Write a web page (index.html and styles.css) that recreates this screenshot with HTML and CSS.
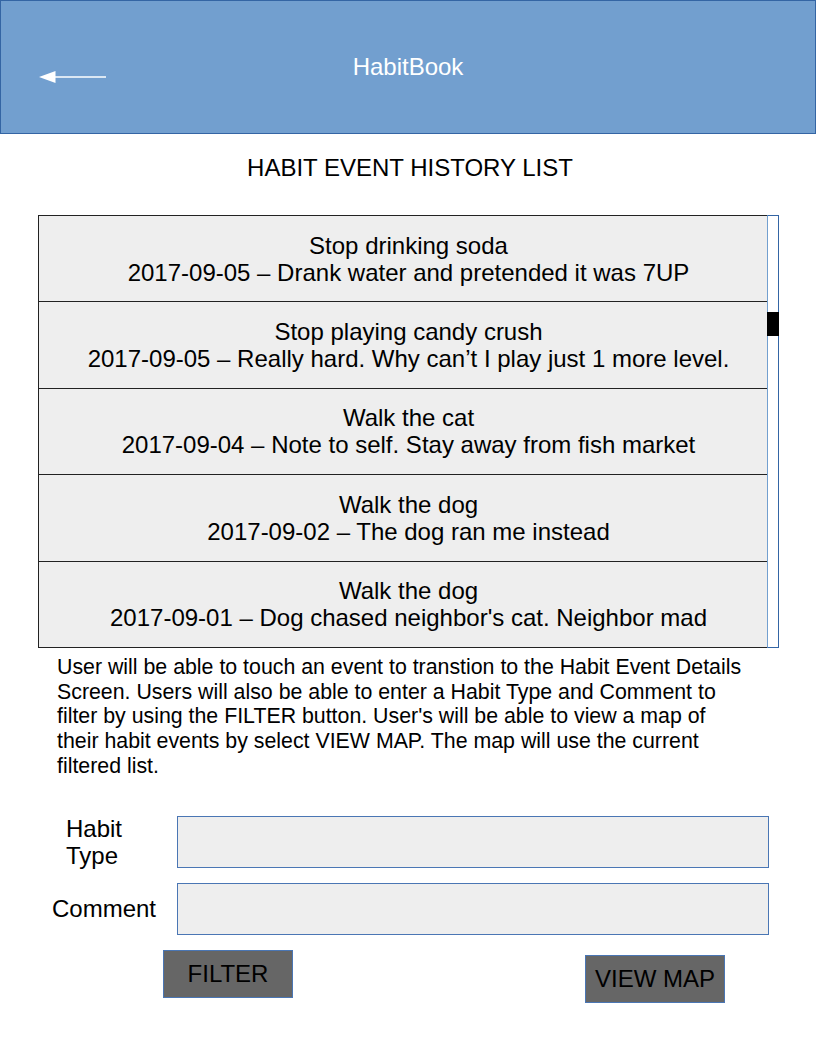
FILE: index.html
```html
<!DOCTYPE html>
<html lang="en">
<head>
<meta charset="utf-8">
<title>HabitBook</title>
<link rel="stylesheet" href="styles.css">
</head>
<body>
<header class="header">
  <svg class="back" width="70" height="14" viewBox="0 0 70 14" aria-hidden="true">
    <polygon points="0,7 16.5,1 16.5,13" fill="#ffffff"/>
    <line x1="16" y1="7" x2="67" y2="7" stroke="#ffffff" stroke-width="1.3"/>
  </svg>
  <div class="app-title">HabitBook</div>
</header>

<h1 class="page-title">HABIT EVENT HISTORY LIST</h1>

<div class="list-wrap">
  <div class="list">
    <div class="row"><div>Stop drinking soda</div><div>2017-09-05 – Drank water and pretended it was 7UP</div></div>
    <div class="row"><div>Stop playing candy crush</div><div>2017-09-05 – Really hard. Why can’t I play just 1 more level.</div></div>
    <div class="row"><div>Walk the cat</div><div>2017-09-04 – Note to self. Stay away from fish market</div></div>
    <div class="row"><div>Walk the dog</div><div>2017-09-02 – The dog ran me instead</div></div>
    <div class="row row-last"><div>Walk the dog</div><div>2017-09-01 – Dog chased neighbor's cat. Neighbor mad</div></div>
  </div>
  <div class="scrollbar"><div class="thumb"></div></div>
</div>

<p class="desc">User will be able to touch an event to transtion to the Habit Event Details Screen. Users will also be able to enter a Habit Type and Comment to filter by using the FILTER button. User's will be able to view a map of their habit events by select VIEW MAP. The map will use the current filtered list.</p>

<div class="form">
  <div class="form-row">
    <div class="label label-type">Habit<br>Type</div>
    <div class="input"></div>
  </div>
  <div class="form-row form-row-2">
    <div class="label label-comment">Comment</div>
    <div class="input"></div>
  </div>
  <div class="buttons">
    <div class="btn btn-filter">FILTER</div>
    <div class="btn btn-map">VIEW MAP</div>
  </div>
</div>
</body>
</html>
```

FILE: styles.css
```css
html, body {
  margin: 0;
  padding: 0;
  background: #ffffff;
}
body {
  font-family: "Liberation Sans", Arial, sans-serif;
  color: #000000;
  width: 816px;
}
.header {
  position: relative;
  box-sizing: border-box;
  height: 134px;
  background: #729fcf;
  border: 1px solid #3465a4;
  display: flex;
  align-items: center;
  justify-content: center;
}
.back {
  position: absolute;
  left: 38px;
  top: 69px;
}
.app-title {
  color: #ffffff;
  font-size: 24px;
  line-height: 27px;
  margin-bottom: 2px;
}
.page-title {
  margin: 20px 0 0;
  padding-left: 4px;
  font-weight: normal;
  font-size: 24px;
  line-height: 27px;
  text-align: center;
}
.list-wrap {
  display: flex;
  margin: 34px 0 0 38px;
  width: 742px;
}
.list {
  width: 730px;
  box-sizing: border-box;
  border-left: 1px solid #222;
}
.row {
  box-sizing: border-box;
  height: 86.4px;
  padding-left: 10px;
  border-top: 1px solid #222;
  background: #eeeeee;
  display: flex;
  flex-direction: column;
  justify-content: center;
  align-items: center;
  font-size: 24px;
  line-height: 27px;
  text-align: center;
}
.row-last {
  height: 87.4px;
  border-bottom: 1px solid #222;
}
.scrollbar {
  box-sizing: border-box;
  width: 12px;
  border: 1px solid #3465a4;
  border-left-color: #729fcf;
  background: #ffffff;
  margin-left: -1px;
}
.thumb {
  margin: 96px -1px 0 -1px;
  height: 24px;
  background: #000000;
}
.desc {
  margin: 7px 0 0 57px;
  width: 695px;
  font-size: 21.33px;
  line-height: 24.75px;
}
.form {
  margin-top: 36px;
}
.form-row {
  display: flex;
  align-items: center;
}
.form-row-2 {
  margin-top: 14px;
}
.label {
  box-sizing: border-box;
  width: 177px;
  font-size: 24px;
  line-height: 27px;
}
.label-type {
  padding-left: 66px;
}
.label-comment {
  padding-left: 52px;
}
.input {
  box-sizing: border-box;
  width: 592px;
  height: 52px;
  background: #eeeeee;
  border: 1px solid #4a76b4;
}
.buttons {
  display: flex;
  align-items: flex-start;
  margin-top: 15px;
  padding-left: 163px;
}
.btn {
  box-sizing: border-box;
  height: 48px;
  background: #666666;
  border: 1px solid #4a76b4;
  font-size: 24px;
  line-height: 46px;
  text-align: center;
  color: #000000;
}
.btn-filter {
  width: 130px;
}
.btn-map {
  width: 140px;
  margin-left: 292px;
  margin-top: 5px;
}
```
